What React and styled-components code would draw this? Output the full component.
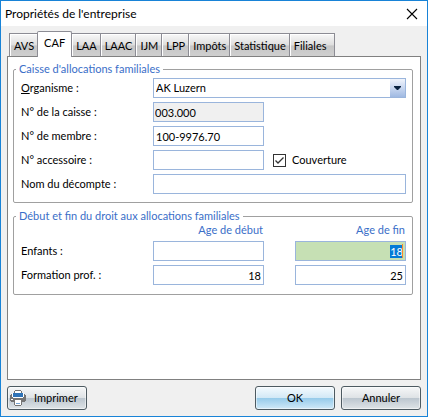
import React, { useEffect, useRef, useState } from 'react';
import styled, { createGlobalStyle, css } from 'styled-components';

const color = {
  frame: '#1883d7',
  face: '#f0f0f0',
  line: '#808080',
  group: '#a0a0a0',
  field: '#9ab5dc',
  blue: '#3a6ec8',
};

const GlobalStyle = createGlobalStyle`
  * {
    box-sizing: border-box;
  }

  body {
    margin: 0;
    color: #000;
    font: 11px/14px Lato, 'Open Sans', sans-serif;
  }

  button,
  input,
  select {
    margin: 0;
    color: inherit;
    font: inherit;
  }
`;

const Dialog = styled.main`
  display: flex;
  flex-direction: column;
  min-height: 100vh;
  border: 1px solid ${color.frame};
  background: ${color.face};
`;

const TitleBar = styled.header`
  display: flex;
  align-items: center;
  justify-content: space-between;
  height: 25px;
  padding-left: 4px;
  background: #fff;
`;

const Title = styled.h1`
  margin: 0;
  font: 12px/24px Lato, 'Open Sans', sans-serif;
`;

const CloseButton = styled.button`
  display: flex;
  align-items: center;
  justify-content: center;
  width: 30px;
  height: 24px;
  padding: 0;
  border: 0;
  background: none;
`;

const Body = styled.form`
  display: flex;
  flex: 1;
  flex-direction: column;
  padding: 6px;
`;

const TabList = styled.div`
  display: flex;
  align-items: flex-end;
  height: 25px;
  padding-left: 2px;
`;

const Tab = styled.button`
  height: 23px;
  margin-bottom: 1px;
  padding: 4px 3px 3px 4px;
  border: solid #8c8c94;
  border-width: 1px 0 0 1px;
  white-space: nowrap;
  background: linear-gradient(#f8f8f8, #dedede 50%, #c6c6c6 54%, #cfcfcf);
  box-shadow: inset 1px 1px #fff;

  &:last-child {
    padding-right: 8px;
    border-right-width: 1px;
  }

  ${({ $active }) =>
    $active &&
    css`
      z-index: 1;
      height: 26px;
      margin-bottom: 0;
      padding: 4px 6px 8px;
      border-width: 1px 1px 0 1px;
      border-radius: 2px 2px 0 0;
      background: #fff;

      & + * {
        border-left: 0;
      }
    `}
`;

const Panel = styled.section`
  flex: 1;
  margin-top: -1px;
  padding: 5px 7px 5px 5px;
  border: 1px solid ${color.line};
  background: #fff;
`;

const Group = styled.fieldset`
  min-width: 0;
  margin: 0;
  padding: ${({ $tight }) => ($tight ? '0 6px 9px 7px' : '2px 6px 8px 7px')};
  border: 1px solid ${color.group};
  border-radius: 2px;

  & + & {
    margin-top: 6px;
  }
`;

const Legend = styled.legend`
  margin-left: -5px;
  padding: 0 3px;
  color: ${color.blue};
`;

const Fields = styled.div`
  display: grid;
  grid-template-columns: 132px minmax(0, 1fr) 31px minmax(0, 1fr);
  row-gap: 4px;
  align-items: center;
`;

const Label = styled.label`
  grid-column: 1;
`;

const Underlined = styled.span`
  text-decoration: underline;
`;

const fieldBox = css`
  width: 100%;
  height: 20px;
  border: 1px solid ${color.field};
  border-radius: 0;
  outline: 0;
  background: #fff;
`;

const TextInput = styled.input`
  ${fieldBox}
  grid-column: ${({ $wide }) => $wide && '2 / 5'};
  padding: 2px;

  &:read-only {
    padding-left: 1px;
    background: ${color.face};
  }
`;

const AgeInput = styled(TextInput)`
  text-align: right;

  &:focus {
    background: #c6e0b4;
  }

  &::selection {
    color: #fff;
    background: rgba(0, 120, 215, 0.99);
  }
`;

const AgeCell = styled.div`
  position: relative;
  display: flex;
  grid-column: 4;

  &:focus-within::after {
    content: '';
    position: absolute;
    top: 3px;
    right: 3px;
    width: 1px;
    height: 14px;
    background: #ff8728;
  }
`;

const ColumnTitle = styled.span`
  grid-column: ${({ $column }) => $column};
  padding-right: 1px;
  color: ${color.blue};
  text-align: right;
`;

const Combo = styled.div`
  position: relative;
  display: flex;
  grid-column: 2 / 5;
`;

const Select = styled.select`
  ${fieldBox}
  appearance: none;
  padding: 0 18px 0 2px;
`;

const ComboArrow = styled.span`
  position: absolute;
  top: 1px;
  right: 1px;
  bottom: 1px;
  display: flex;
  align-items: center;
  justify-content: center;
  width: 15px;
  background: linear-gradient(#f0f4fc, #9fb9e2);
  pointer-events: none;
`;

const CheckLabel = styled.label`
  display: flex;
  grid-column: 3 / 5;
  align-items: center;
  gap: 6px;
  padding-left: 9px;
`;

const CheckBox = styled.span`
  display: grid;
  width: 13px;
  height: 13px;

  & > * {
    grid-area: 1 / 1;
  }

  & svg {
    visibility: hidden;
    pointer-events: none;
  }

  & input:checked + svg {
    visibility: visible;
  }
`;

const CheckInput = styled.input`
  appearance: none;
  width: 13px;
  height: 13px;
  border: 1px solid #333;
  background: #fff;
`;

const Footer = styled.footer`
  display: flex;
  gap: 6px;
  padding-top: 6px;
`;

const tones = {
  grey: 'linear-gradient(#f6f7f8, #dfe3e6 48%, #bcc6cf 52%, #dfe4e7)',
  blue: 'linear-gradient(#f4fafe, #d3e9f6 48%, #97cbea 52%, #d0e9f8)',
};

const Button = styled.button`
  display: flex;
  align-items: center;
  justify-content: center;
  width: 80px;
  height: 24px;
  padding: 0;
  border: 1px solid #4d5a61;
  border-radius: 3px;
  background: ${({ $tone }) => tones[$tone]};
  box-shadow: inset 0 0 0 1px rgba(255, 255, 255, 0.5);
`;

const PrintButton = styled(Button)`
  justify-content: flex-start;
  gap: 8px;
  margin-right: auto;
  padding-left: 2px;
`;

function CloseIcon() {
  return (
    <svg width='12' height='12' viewBox='0 0 12 12' aria-hidden='true'>
      <path d='M1 1 L11 11 M11 1 L1 11' fill='none' stroke='#000' strokeWidth='1.1' />
    </svg>
  );
}

function PrinterIcon() {
  return (
    <svg width='16' height='16' viewBox='0 0 16 16' shapeRendering='crispEdges' aria-hidden='true'>
      <path d='M5 0h6v1h1v3H4V1h1z' fill='#747474' />
      <path d='M5 1h6v2H5z' fill='#fff' />
      <path d='M0 5h1V4h2v4h10V4h2v1h1v6h-1v1H1v-1H0z' fill='#747474' />
      <path d='M3 3h10v4H3z' fill='#2f73b7' />
      <path d='M2 3h1v4H2zM13 3h1v4h-1zM3 7h10v1H3z' fill='#fff' />
      <path d='M1 9h2v1H1z' fill='#fff' />
      <path d='M4 10h8v5h-1v1H5v-1H4z' fill='#747474' />
      <path d='M5 10h6v5H5z' fill='#fff' />
      <path d='M6 13h4v1H6z' fill='#7ba6d2' />
    </svg>
  );
}

const tabs = ['AVS', 'CAF', 'LAA', 'LAAC', 'IJM', 'LPP', 'Impôts', 'Statistique', 'Filiales'];

export default function App() {
  const [active, setActive] = useState('CAF');
  const ageRef = useRef(null);

  useEffect(() => {
    ageRef.current.focus();
    ageRef.current.select();
  }, []);

  return (
    <>
      <GlobalStyle />
      <Dialog>
        <TitleBar>
          <Title>Propriétés de l'entreprise</Title>
          <CloseButton type='button' aria-label='Fermer'>
            <CloseIcon />
          </CloseButton>
        </TitleBar>
        <Body onSubmit={(e) => e.preventDefault()}>
          <TabList role='tablist'>
            {tabs.map((tab) => (
              <Tab
                key={tab}
                type='button'
                role='tab'
                aria-selected={tab === active}
                $active={tab === active}
                onClick={() => setActive(tab)}
              >
                {tab}
              </Tab>
            ))}
          </TabList>
          <Panel role='tabpanel' aria-label={active}>
            <Group>
              <Legend>Caisse d'allocations familiales</Legend>
              <Fields>
                <Label htmlFor='organisme'>
                  <Underlined>O</Underlined>rganisme :
                </Label>
                <Combo>
                  <Select id='organisme'>
                    <option>AK Luzern</option>
                  </Select>
                  <ComboArrow>
                    <svg width='7' height='4' viewBox='0 0 7 4' aria-hidden='true'>
                      <path d='M0 0h7v1L4 4H3L0 1z' fill='#0a2340' />
                    </svg>
                  </ComboArrow>
                </Combo>
                <Label htmlFor='caisse'>N° de la caisse :</Label>
                <TextInput id='caisse' defaultValue='003.000' readOnly />
                <Label htmlFor='membre'>N° de membre :</Label>
                <TextInput id='membre' defaultValue='100-9976.70' />
                <Label htmlFor='accessoire'>N° accessoire :</Label>
                <TextInput id='accessoire' />
                <CheckLabel>
                  <CheckBox>
                    <CheckInput type='checkbox' defaultChecked />
                    <svg width='13' height='13' viewBox='0 0 13 13' aria-hidden='true'>
                      <path d='M2.5 6.5 L5 9 L10.5 3.5' fill='none' stroke='#333' strokeWidth='1.3' />
                    </svg>
                  </CheckBox>
                  Couverture
                </CheckLabel>
                <Label htmlFor='decompte'>Nom du décompte :</Label>
                <TextInput id='decompte' $wide />
              </Fields>
            </Group>
            <Group $tight>
              <Legend>Début et fin du droit aux allocations familiales</Legend>
              <Fields>
                <ColumnTitle id='debut' $column={2}>
                  Age de début
                </ColumnTitle>
                <ColumnTitle id='fin' $column={4}>
                  Age de fin
                </ColumnTitle>
                <Label id='enfants' htmlFor='enfants-debut'>
                  Enfants :
                </Label>
                <AgeInput id='enfants-debut' aria-labelledby='enfants debut' />
                <AgeCell>
                  <AgeInput ref={ageRef} defaultValue='18' aria-labelledby='enfants fin' />
                </AgeCell>
                <Label id='formation' htmlFor='formation-debut'>
                  Formation prof. :
                </Label>
                <AgeInput id='formation-debut' defaultValue='18' aria-labelledby='formation debut' />
                <AgeCell>
                  <AgeInput defaultValue='25' aria-labelledby='formation fin' />
                </AgeCell>
              </Fields>
            </Group>
          </Panel>
          <Footer>
            <PrintButton type='button' $tone='grey'>
              <PrinterIcon />
              Imprimer
            </PrintButton>
            <Button type='submit' $tone='blue'>
              OK
            </Button>
            <Button type='button' $tone='grey'>
              Annuler
            </Button>
          </Footer>
        </Body>
      </Dialog>
    </>
  );
}
